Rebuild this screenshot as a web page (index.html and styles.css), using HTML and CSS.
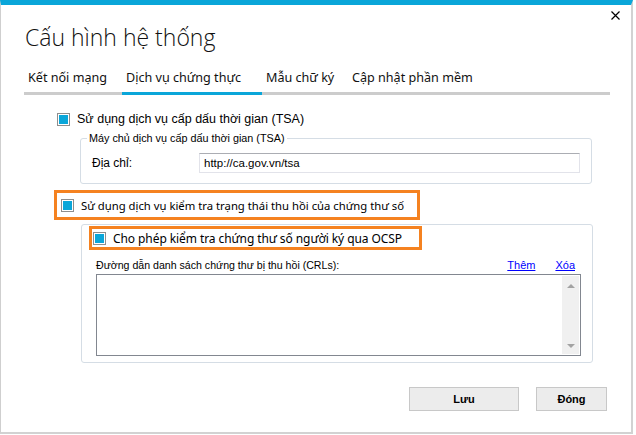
FILE: index.html
```html
<!DOCTYPE html>
<html lang="vi">

<head>
    <meta charset="UTF-8">
    <title>Cấu hình hệ thống</title>
    <link rel="stylesheet" href="styles.css">
</head>

<body>
    <div class="window">
        <div class="titlebar">
            <svg class="close" width="9" height="9" viewBox="0 0 9 9">
                <path d="M0.5 0.5 L8.5 8.5 M8.5 0.5 L0.5 8.5" stroke="#000" stroke-width="1.2" fill="none" />
            </svg>
        </div>
        <h1 class="title">Cấu hình hệ thống</h1>

        <div class="tabs">
            <div class="tab tab-1">Kết nối mạng</div>
            <div class="tab tab-2 active">Dịch vụ chứng thực</div>
            <div class="tab tab-3">Mẫu chữ ký</div>
            <div class="tab tab-4">Cập nhật phần mềm</div>
        </div>

        <div class="panel">
            <div class="check tsa-check"><span class="box"></span>Sử dụng dịch vụ cấp dấu thời gian (TSA)</div>

            <fieldset class="group tsa-group">
                <legend>Máy chủ dịch vụ cấp dấu thời gian (TSA)</legend>
                <div class="field">
                    <span class="field-label">Địa chỉ:</span>
                    <div class="input">http://ca.gov.vn/tsa</div>
                </div>
            </fieldset>

            <div class="check big hl revoke-check"><span class="box"></span>Sử dụng dịch vụ kiểm tra trạng thái thu hồi của chứng thư số</div>

            <div class="group crl-group">
                <div class="check big hl ocsp-check"><span class="box"></span>Cho phép kiểm tra chứng thư số người ký qua OCSP</div>
                <div class="crl-head">
                    <span class="crl-label">Đường dẫn danh sách chứng thư bị thu hồi (CRLs):</span>
                    <a href="#">Thêm</a>
                    <a href="#">Xóa</a>
                </div>
                <div class="listbox">
                    <div class="scrollbar">
                        <span class="arrow up"></span>
                        <span class="arrow down"></span>
                    </div>
                </div>
            </div>
        </div>

        <div class="actions">
            <button class="btn btn-save">Lưu</button>
            <button class="btn btn-close">Đóng</button>
        </div>
    </div>
</body>

</html>
```

FILE: styles.css
```css
* {
    box-sizing: border-box;
}

body {
    margin: 0;
    background: #fff;
    font-family: "Liberation Sans", Arial, sans-serif;
    font-size: 11px;
    color: #000;
}

.window {
    width: 633px;
    height: 434px;
    border-top: 5px solid #0aa6d9;
    border-left: 1px solid #cfcfcf;
    border-right: 2px solid #d2d2d2;
    border-bottom: 2px solid #d2d2d2;
    background: #fff;
}

.titlebar {
    display: flex;
    justify-content: flex-end;
    padding: 6px 11px 0 0;
    height: 15px;
}

.title {
    margin: 2px 0 0 24px;
    font-family: "Open Sans", sans-serif;
    font-weight: 300;
    font-size: 23px;
    line-height: 30px;
    color: #111;
}

/* tabs */
.tabs {
    display: flex;
    margin: 17px 0 0 23px;
    width: 586px;
    border-bottom: 3px solid #cccccc;
}

.tab {
    font-family: "Noto Sans", sans-serif;
    font-size: 12.6px;
    line-height: 18px;
    padding: 0 0 5px 4px;
    color: #111;
    white-space: nowrap;
}

.tab-1 { width: 98px; }
.tab-2 { width: 140px; }
.tab-3 { width: 86px; }
.tab-4 { flex: 1; }

.tab.active {
    border-bottom: 3px solid #0aa6d9;
    margin-bottom: -3px;
}

/* checkboxes */
.check {
    display: flex;
    align-items: center;
    gap: 7px;
    height: 16px;
    white-space: nowrap;
}

.box {
    width: 13px;
    height: 13px;
    border: 1px solid #8e8e8e;
    padding: 1px;
    background: #0aa6d9;
    background-clip: content-box;
    flex: none;
}

.big {
    font-family: "Noto Sans", sans-serif;
}

.hl {
    border: 3px solid #f58220;
}

.tsa-check {
    margin: 16px 0 0 56px;
    font-size: 12.5px;
}

/* group boxes */
.group {
    border: 1px solid #d5dde5;
    border-radius: 3px;
}

.tsa-group {
    margin: 4px 0 0 79px;
    width: 512px;
    padding: 8px 11px 10px 6px;
}

.tsa-group legend {
    padding: 0 2px;
    line-height: 14px;
    font-size: 10.8px;
}

.field {
    display: flex;
    align-items: center;
    padding-left: 5px;
}

.field-label {
    width: 107px;
    font-size: 12px;
}

.input {
    flex: 1;
    height: 20px;
    line-height: 18px;
    padding-left: 4px;
    font-size: 11.5px;
    border: 1px solid #e2e3ea;
    border-top-color: #abadb3;
}

.revoke-check {
    margin: 6px 0 0 53px;
    width: 366px;
    height: 30px;
    padding-left: 4px;
    font-size: 11.3px;
}

.crl-group {
    margin: 4px 0 0 80px;
    width: 512px;
    padding: 1px 11px 6px 14px;
}

.ocsp-check {
    margin-left: -7px;
    width: 333px;
    height: 24px;
    padding-left: 1px;
    font-size: 12px;
    letter-spacing: -0.08px;
}

.crl-head {
    display: flex;
    align-items: center;
    height: 14px;
    margin: 8px 0 2px;
    padding-right: 6px;
}

.crl-label {
    flex: 1;
    font-size: 10.6px;
}

.crl-head a {
    color: #0000ff;
    margin-left: 20px;
}

.listbox {
    height: 82px;
    border: 1px solid #828790;
    display: flex;
    justify-content: flex-end;
    padding: 1px;
}

.scrollbar {
    width: 17px;
    background: #f0f0f0;
    display: flex;
    flex-direction: column;
    justify-content: space-between;
    align-items: center;
    padding: 8px 0 6px;
}

.arrow {
    width: 0;
    height: 0;
    border-left: 4px solid transparent;
    border-right: 4px solid transparent;
}

.arrow.up {
    border-bottom: 4px solid #a3a3a3;
}

.arrow.down {
    border-top: 4px solid #a3a3a3;
}

/* buttons */
.actions {
    display: flex;
    justify-content: flex-end;
    gap: 17px;
    margin-top: 24px;
    padding-right: 24px;
}

.btn {
    height: 24px;
    background: #ececec;
    border: 1px solid #c8c8c8;
    font-family: "Liberation Sans", Arial, sans-serif;
    font-size: 11px;
    font-weight: bold;
    color: #000;
    padding: 0;
}

.btn-save { width: 110px; }
.btn-close { width: 71px; }
```
